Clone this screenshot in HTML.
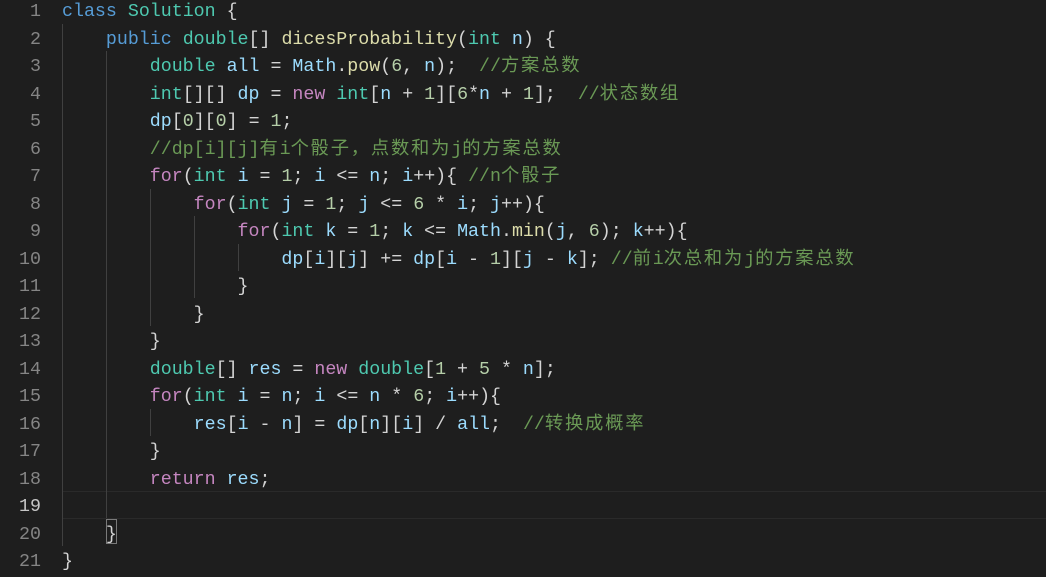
<!DOCTYPE html>
<html><head><meta charset="utf-8"><style>
html,body{margin:0;padding:0;background:#1e1e1e;width:1046px;height:577px;overflow:hidden}
#w{position:relative;width:1046px;height:577px}
pre{margin:0;font-family:"Liberation Mono","Noto Sans CJK SC",monospace;font-size:18.3px;line-height:27.5px;position:absolute;top:-0.75px;white-space:pre}
#code{left:62px;color:#d4d4d4}
#ln{left:0;width:41px;text-align:right;color:#858585}
.k{color:#569cd6}.t{color:#4ec9b0}.f{color:#dcdcaa}.v{color:#9cdcfe}.c{color:#c586c0}.n{color:#b5cea8}.m{color:#6a9955}
.z{letter-spacing:1.8px}
.g{position:absolute;width:1px;background:#404040}
#cur{position:absolute;left:62px;right:0;top:491px;height:26px;border-top:1.5px solid #2a2a2a;border-bottom:1.5px solid #2a2a2a}
#br{position:absolute;left:106px;top:519px;width:11px;height:25px;border:1px solid #7a7a7a;box-sizing:border-box}
</style></head><body><div id="w">
<div id="cur"></div>
<div class="g" style="left:62px;top:24px;height:522px"></div>
<div class="g" style="left:106px;top:51px;height:467px"></div>
<div class="g" style="left:150px;top:189px;height:137px"></div>
<div class="g" style="left:150px;top:409px;height:27px"></div>
<div class="g" style="left:194px;top:216px;height:82px"></div>
<div class="g" style="left:238px;top:244px;height:27px"></div>
<div id="br"></div>
<pre id="ln">1
2
3
4
5
6
7
8
9
10
11
12
13
14
15
16
17
18
<span style="color:#c6c6c6">19</span>
20
21</pre>
<pre id="code"><span class="k">class</span> <span class="t">Solution</span> {
    <span class="k">public</span> <span class="t">double</span>[] <span class="f">dicesProbability</span>(<span class="t">int</span> <span class="v">n</span>) {
        <span class="t">double</span> <span class="v">all</span> = <span class="v">Math</span>.<span class="f">pow</span>(<span class="n">6</span>, <span class="v">n</span>);  <span class="m">//<span class="z">方案总数</span></span>
        <span class="t">int</span>[][] <span class="v">dp</span> = <span class="c">new</span> <span class="t">int</span>[<span class="v">n</span> + <span class="n">1</span>][<span class="n">6</span>*<span class="v">n</span> + <span class="n">1</span>];  <span class="m">//<span class="z">状态数组</span></span>
        <span class="v">dp</span>[<span class="n">0</span>][<span class="n">0</span>] = <span class="n">1</span>;
        <span class="m">//dp[i][j]<span class="z">有</span>i<span class="z">个骰子，点数和为</span>j<span class="z">的方案总数</span></span>
        <span class="c">for</span>(<span class="t">int</span> <span class="v">i</span> = <span class="n">1</span>; <span class="v">i</span> &lt;= <span class="v">n</span>; <span class="v">i</span>++){ <span class="m">//n<span class="z">个骰子</span></span>
            <span class="c">for</span>(<span class="t">int</span> <span class="v">j</span> = <span class="n">1</span>; <span class="v">j</span> &lt;= <span class="n">6</span> * <span class="v">i</span>; <span class="v">j</span>++){
                <span class="c">for</span>(<span class="t">int</span> <span class="v">k</span> = <span class="n">1</span>; <span class="v">k</span> &lt;= <span class="v">Math</span>.<span class="f">min</span>(<span class="v">j</span>, <span class="n">6</span>); <span class="v">k</span>++){
                    <span class="v">dp</span>[<span class="v">i</span>][<span class="v">j</span>] += <span class="v">dp</span>[<span class="v">i</span> - <span class="n">1</span>][<span class="v">j</span> - <span class="v">k</span>]; <span class="m">//<span class="z">前</span>i<span class="z">次总和为</span>j<span class="z">的方案总数</span></span>
                }
            }
        }
        <span class="t">double</span>[] <span class="v">res</span> = <span class="c">new</span> <span class="t">double</span>[<span class="n">1</span> + <span class="n">5</span> * <span class="v">n</span>];
        <span class="c">for</span>(<span class="t">int</span> <span class="v">i</span> = <span class="v">n</span>; <span class="v">i</span> &lt;= <span class="v">n</span> * <span class="n">6</span>; <span class="v">i</span>++){
            <span class="v">res</span>[<span class="v">i</span> - <span class="v">n</span>] = <span class="v">dp</span>[<span class="v">n</span>][<span class="v">i</span>] / <span class="v">all</span>;  <span class="m">//<span class="z">转换成概率</span></span>
        }
        <span class="c">return</span> <span class="v">res</span>;

    }
}</pre>
</div></body></html>
